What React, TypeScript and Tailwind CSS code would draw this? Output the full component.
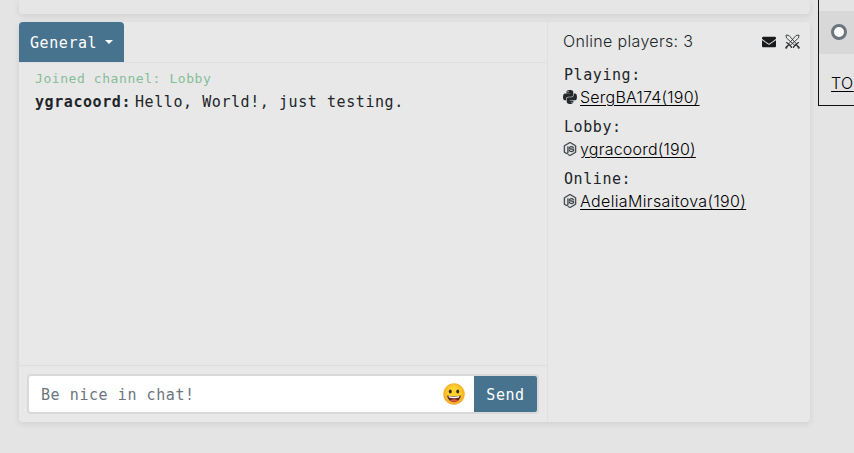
import { FaEnvelope, FaNodeJs, FaPython } from "react-icons/fa";

const mono = "font-['DejaVu_Sans_Mono',monospace] text-[15px] tracking-[0.57px] whitespace-pre";
const sans = "font-['Inter',sans-serif] font-[350] whitespace-pre";
const cardShadow = "shadow-[0_2px_6px_rgba(0,0,0,0.09)]";

function Swords() {
  return (
    <svg viewBox="0 0 30 30" className="h-[15px] w-[15px]" fill="none" stroke="#2b2f32" strokeWidth="1.7">
      <path d="M2 2l6 1 15 17-3 3L3 8z" />
      <path d="M28 2l-6 1L7 20l3 3L27 8z" />
      <path d="M2 17l3 1 8 8v2 M28 17l-3 1-8 8v2" strokeWidth="2.4" />
      <path d="M7 22l-5 5 M23 22l5 5" strokeWidth="3" />
      <circle cx="2.5" cy="27.5" r="1.5" />
      <circle cx="27.5" cy="27.5" r="1.5" />
    </svg>
  );
}

function Smile() {
  return (
    <svg viewBox="0 0 44 44" className="-mt-px h-[22px] w-[22px]">
      <defs>
        <radialGradient id="face" cx="50%" cy="45%" r="55%">
          <stop offset="0.5" stopColor="#fdd32f" />
          <stop offset="1" stopColor="#f2a129" />
        </radialGradient>
      </defs>
      <circle cx="22" cy="22" r="21.5" fill="url(#face)" />
      <ellipse cx="14.5" cy="17" rx="3" ry="4" fill="#422b0d" />
      <ellipse cx="29.5" cy="17" rx="3" ry="4" fill="#422b0d" />
      <path d="M8 25Q22 28 36 25Q34 37 22 38Q10 37 8 25Z" fill="#5d2a1c" />
      <path d="M11 26Q22 29 33 26L32 29Q22 32 12 29Z" fill="#fff" />
      <path d="M14 35Q22 30 30 35Q22 39 14 35Z" fill="#ef5350" />
    </svg>
  );
}

function Player({ label, name, python, tracking }: { label: string; name: string; python?: boolean; tracking: string }) {
  return (
    <div className="h-[52px]">
      <div className={`${mono} h-[22px] pl-px leading-[24px] text-[#212529]`}>{label}</div>
      <div className="flex h-[24px] items-center">
        <span className="flex w-[17px] shrink-0">
          {python ? (
            <FaPython size={16} color="#26292c" className="-ml-px" />
          ) : (
            <FaNodeJs size={14} color="#30363b" stroke="#30363b" strokeWidth={10} />
          )}
        </span>
        <span className={`${sans} ${tracking} text-[16px] leading-[24px] text-black underline decoration-1 underline-offset-[2px]`}>{name}</span>
      </div>
    </div>
  );
}

export default function App() {
  return (
    <div className="flex h-[453px] w-[854px] overflow-hidden bg-[#e4e4e4] pl-[19px]">
      <main className="w-[791px] shrink-0">
        <div className={`h-[14px] rounded-b bg-[#e6e6e6] ${cardShadow}`} />
        <section className={`mt-2 flex h-[400px] rounded bg-[#e8e8e8] ${cardShadow}`}>
          <div className="flex w-[529px] shrink-0 flex-col border-r border-[#e0e0e0]">
            <div className="h-[41px] border-b border-[#dee0e4]">
              <button className="flex h-10 w-[105px] items-center rounded-t bg-[#48738f] pl-[11px] text-white">
                <span className={`${mono} pt-[2px]`}>General</span>
                <span className="ml-[8px] border-x-[4px] border-t-[4px] border-x-transparent border-t-white" />
              </button>
            </div>
            <div className="flex-1 pt-[4px] pl-4">
              <div className="h-[23px] font-['DejaVu_Sans_Mono',monospace] text-[13px] leading-[23px] tracking-[0.574px] text-[#86bd98]">Joined channel: Lobby</div>
              <div className={`${mono} flex h-6 leading-6 text-[#212529]`}>
                <b className="w-[100px]">ygracoord:</b>
                <span>Hello, World!, just testing.</span>
              </div>
            </div>
            <div className="flex h-[57px] items-start border-t border-[#dedede] pt-[8px] pl-2">
              <div className="flex h-[40px] w-[512px] overflow-hidden rounded border-2 border-[#d9d9d9] bg-white">
                <div className="flex flex-1 items-center justify-between pr-[9px] pl-[12px]">
                  <span className={`${mono} pt-[2px] text-[#6c757d]`}>Be nice in chat!</span>
                  <Smile />
                </div>
                <button className={`${mono} w-[63px] bg-[#48738f] pt-[2px] text-white`}>Send</button>
              </div>
            </div>
          </div>
          <aside className="min-w-0 flex-1 pt-[7px] pl-[15px]">
            <div className="flex h-[24px] items-center">
              <span className={`${sans} w-[199px] text-[16px] tracking-[0.33px] text-[#212529]`}>Online players: 3</span>
              <FaEnvelope size={14} color="#181a1c" className="mt-px" />
              <span className="mt-px ml-[9px]"><Swords /></span>
            </div>
            <div className="pt-[10px]">
              <Player label="Playing:" name="SergBA174(190)" python tracking="tracking-[0.22px]" />
              <Player label="Lobby:" name="ygracoord(190)" tracking="tracking-[0.22px]" />
              <Player label="Online:" name="AdeliaMirsaitova(190)" tracking="tracking-[0.35px]" />
            </div>
          </aside>
        </section>
      </main>
      <aside className="ml-[8px] h-[106px] w-[60px] shrink-0 border-b border-l border-[#111] pt-[11px]">
        <div className="flex h-[43px] items-center bg-[#d8d8d8] pb-px pl-[12px]">
          <span className="h-4 w-4 rounded-full border-[3px] border-[#6c757d] bg-white" />
        </div>
        <div className={`${sans} mt-[17px] pl-[12px] text-[16px] leading-6 tracking-[0.4px] text-black underline decoration-1 underline-offset-[2px]`}>TO</div>
      </aside>
    </div>
  );
}
